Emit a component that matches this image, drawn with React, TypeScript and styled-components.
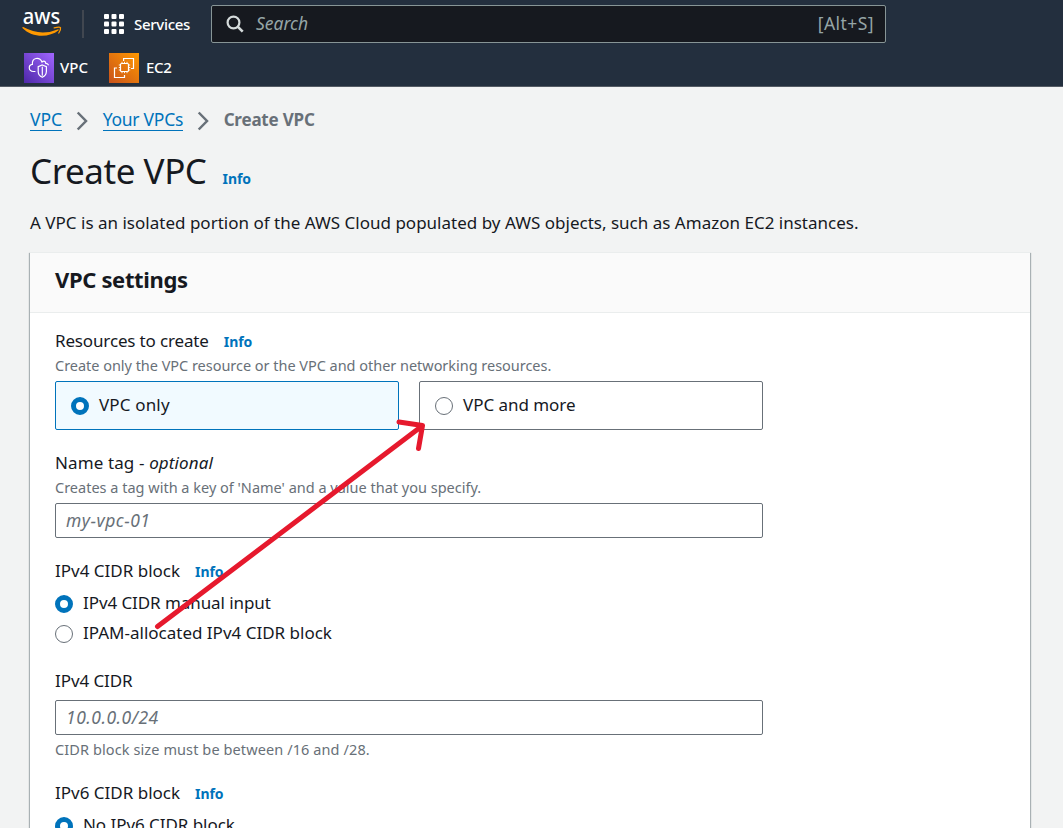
import React from "react";
import styled, { createGlobalStyle } from "styled-components";

const Global = createGlobalStyle`
  * { box-sizing: border-box; }
  html, body { margin: 0; height: 828px; overflow: hidden; background: #f2f3f3; }
  body { font-family: "Noto Sans", "Open Sans", sans-serif; color: #16191f; font-size: 17px; }
`;

const Page = styled.div`
  position: relative;
  height: 828px;
  overflow: hidden;
`;

const Text = styled.span<{ $size?: number; $track?: number; $weight?: number; $color?: string; $italic?: boolean }>`
  font-size: ${(p) => p.$size ?? 17}px;
  letter-spacing: ${(p) => p.$track ?? 0}px;
  font-weight: ${(p) => p.$weight ?? 400};
  color: ${(p) => p.$color ?? "inherit"};
  font-style: ${(p) => (p.$italic ? "italic" : "normal")};
  white-space: nowrap;
`;

const Header = styled.header`
  height: 87px;
  background: #232f3e;
  border-bottom: 1px solid #545b64;
  color: #fff;
`;

const NavRow = styled.div`
  display: flex;
  align-items: center;
  height: 48px;
  padding-left: 22px;
`;

const Divider = styled.div`
  width: 2px;
  height: 28px;
  margin: 0 20px;
  background: #414750;
`;

const Services = styled.div`
  display: flex;
  align-items: center;
  gap: 10px;
  width: 107px;
`;

const SearchBox = styled.div`
  display: flex;
  align-items: center;
  width: 675px;
  height: 38px;
  padding: 0 11px 1px 14px;
  border: 1px solid #879596;
  border-radius: 2px;
  background: #16191f;
  color: #95a5a6;
`;

const SearchHint = styled.div`
  flex: 1;
  margin: -2px 0 0 12px;
`;

const Shortcut = styled.div`
  margin-top: -2px;
`;

const Favorites = styled.div`
  display: flex;
  gap: 21px;
  padding: 5px 0 0 24px;
`;

const Favorite = styled.div<{ $gap: number }>`
  display: flex;
  align-items: center;
  gap: ${(p) => p.$gap}px;
  height: 30px;
  line-height: 28px;

  span { margin-top: -3px; }
`;

const Main = styled.main`
  padding: 0 33px 0 30px;
`;

const Breadcrumbs = styled.nav`
  display: flex;
  align-items: center;
  height: 24px;
  margin-top: 20px;
`;

const Crumb = styled.a`
  height: 23px;
  line-height: 22px;
  border-bottom: 1px solid #0073bb;
  color: #0073bb;
`;

const TitleRow = styled.div`
  display: flex;
  align-items: baseline;
  gap: 16px;
  height: 48px;
  line-height: 46px;
  margin-top: 17px;
`;

const Description = styled.p`
  margin: 15px 0 17px;
  height: 24px;
  line-height: 24px;
`;

const Card = styled.section`
  height: 640px;
  background: #fff;
  border-top: 1px solid #eaeded;
  box-shadow: 1px 1px 1px rgba(0, 28, 36, 0.3), -1px 1px 1px rgba(0, 28, 36, 0.3);
`;

const CardHeader = styled.h2`
  margin: 0;
  height: 60px;
  padding: 0 25px;
  line-height: 50px;
  border-bottom: 1px solid #eaeded;
  background: #fafafa;
`;

const CardBody = styled.div`
  width: 733px;
  padding: 15px 0 0 25px;
`;

const Field = styled.div<{ $gap: number }>`
  margin-bottom: ${(p) => p.$gap}px;
`;

const Label = styled.div<{ $gap?: number }>`
  display: flex;
  align-items: baseline;
  gap: 15px;
  height: 27px;
  line-height: 25px;
  margin-bottom: ${(p) => p.$gap ?? 0}px;
`;

const Hint = styled.div<{ $top?: number }>`
  height: 20px;
  line-height: 20px;
  margin: ${(p) => p.$top ?? 0}px 0 6px;
`;

const Tiles = styled.div`
  display: grid;
  grid-template-columns: 1fr 1fr;
  gap: 20px;
`;

const Tile = styled.div<{ $selected?: boolean }>`
  display: flex;
  align-items: center;
  gap: 10px;
  height: 49px;
  padding: 0 15px 3px;
  border: 1px solid ${(p) => (p.$selected ? "#0073bb" : "#687078")};
  border-radius: 2px;
  background: ${(p) => (p.$selected ? "#f1faff" : "#fff")};
`;

const Radio = styled.span<{ $checked?: boolean }>`
  flex: none;
  width: 18px;
  height: 18px;
  margin-top: 3px;
  border-radius: 50%;
  border: ${(p) => (p.$checked ? "5.5px solid #0073bb" : "1.25px solid #687078")};
  background: #fff;
`;

const RadioRow = styled.div`
  display: flex;
  align-items: center;
  gap: 10px;
  height: 30px;
  padding-bottom: 2px;
`;

const Input = styled.div`
  height: 35px;
  line-height: 32px;
  padding-left: 10px;
  border: 1px solid #687078;
  border-radius: 2px;
`;

const Annotation = styled.svg`
  position: absolute;
  left: 0;
  top: 0;
`;

const Info = () => <Text $size={14} $weight={700} $color="#0073bb" $track={-0.1}>Info</Text>;

const Chevron = styled.svg`
  margin: 3px 15px 0 13.5px;
`;

const Arrow = () => (
  <Chevron width="12" height="20" viewBox="0 0 12 20" fill="none" stroke="#687078" strokeWidth="2.5">
    <path d="M1.700 1.500 L10 10 L1.700 18.500" />
  </Chevron>
);

const LogoText = styled.text`
  font-size: 22.5px;
  font-weight: 500;
`;

const Logo = () => (
  <svg width="40" height="48" viewBox="0 -8 40 48" fill="#fff">
    <LogoText x="0.800" y="16.300" textLength="37.500" lengthAdjust="spacingAndGlyphs">aws</LogoText>
    <path fill="#f90" d="M.4 19.300 Q.6 18.700 1.300 19.100 Q18.500 28.600 35.500 21.400 Q37 21 36.600 22.200 C27 30 10 29.800 .4 19.900 Z" />
    <path fill="none" stroke="#f90" strokeWidth="1.300" strokeLinecap="round" d="M32.200 19.900 Q37.500 18.600 38.500 19.600 Q39 21.500 36.800 25" />
  </svg>
);

const GridIcon = () => (
  <svg width="20" height="20" viewBox="0 0 20 20" fill="#fff">
    {[0, 7.5, 15].map((y) => [0, 7.5, 15].map((x) => <rect key={`${x}-${y}`} x={x} y={y} width="5" height="5" rx="1" />))}
  </svg>
);

const SearchIcon = () => (
  <svg width="18" height="18" viewBox="0 0 18 18" fill="none" stroke="#d5dbdb" strokeWidth="2.200">
    <circle cx="7.500" cy="7.500" r="5.900" />
    <path d="M11.700 11.700 L16.700 16.700" strokeWidth="2.600" />
  </svg>
);

const VpcIcon = () => (
  <svg width="30" height="30" viewBox="0 0 30 30" fill="none" stroke="#fff" strokeWidth="1.200" strokeLinecap="round">
    <linearGradient id="vpc" x1="0" y1="1" x2="1" y2="0">
      <stop offset="0" stopColor="#4d27a8" />
      <stop offset="1" stopColor="#a166ff" />
    </linearGradient>
    <rect width="30" height="30" fill="url(#vpc)" stroke="none" />
    <path d="M11 18.500 H9.500 C3.800 18 4.300 12 8.400 11.400 C7.800 4.500 15.500 3.400 18 9 C20 7.200 21.700 8.600 21.800 10.400 Q23.600 10.500 24.300 11.800" />
    <path d="M18.300 12 L22.400 13.600 V18.500 Q22.200 22.500 18.300 24.300 Q14.300 22.500 14.200 18.500 V13.600 Z M18.300 14 V22.200" />
  </svg>
);

const Ec2Icon = () => (
  <svg width="30" height="30" viewBox="0 0 30 30" fill="none" stroke="#fff" strokeWidth="1.200">
    <linearGradient id="ec2" x1="0" y1="1" x2="1" y2="0">
      <stop offset="0" stopColor="#c8511b" />
      <stop offset="1" stopColor="#f90" />
    </linearGradient>
    <rect width="30" height="30" fill="url(#ec2)" stroke="none" />
    <path d="M14.600 8 V5.500 H24.500 V15.500 H22" />
    <path d="M8 15 H5.500 V24.500 H15.500 V22" />
    <rect x="11.500" y="10.500" width="8" height="8" rx="1" />
    <path strokeWidth=".9" d="M13 8.800 V10.500 M15.500 8.800 V10.500 M18 8.800 V10.500 M13 18.500 V20.200 M15.500 18.500 V20.200 M18 18.500 V20.200 M9.800 12 H11.500 M9.800 14.500 H11.500 M9.800 17 H11.500 M19.500 12 H21.200 M19.500 14.500 H21.200 M19.500 17 H21.200" />
  </svg>
);

export default function App() {
  return (
    <Page>
      <Global />
      <Header>
        <NavRow>
          <Logo />
          <Divider />
          <Services><GridIcon /><Text $size={15} $weight={500} $track={-0.3}>Services</Text></Services>
          <SearchBox>
            <SearchIcon />
            <SearchHint><Text $size={17.5} $italic>Search</Text></SearchHint>
            <Shortcut><Text $size={17.5} $track={0.45}>[Alt+S]</Text></Shortcut>
          </SearchBox>
        </NavRow>
        <Favorites>
          <Favorite $gap={6}><VpcIcon /><Text $size={15} $weight={500}>VPC</Text></Favorite>
          <Favorite $gap={7}><Ec2Icon /><Text $size={15} $weight={500} $track={-0.3}>EC2</Text></Favorite>
        </Favorites>
      </Header>
      <Main>
        <Breadcrumbs>
          <Crumb><Text $size={17.5}>VPC</Text></Crumb><Arrow />
          <Crumb><Text $size={17.5} $track={-0.25}>Your VPCs</Text></Crumb><Arrow />
          <Text $weight={700} $color="#687078" $track={-0.2}>Create VPC</Text>
        </Breadcrumbs>
        <TitleRow><Text $size={35} $track={-0.45}>Create VPC</Text><Info /></TitleRow>
        <Description><Text $track={0.01}>A VPC is an isolated portion of the AWS Cloud populated by AWS objects, such as Amazon EC2 instances.</Text></Description>
        <Card>
          <CardHeader><Text $size={22} $weight={700} $track={-0.35}>VPC settings</Text></CardHeader>
          <CardBody>
            <Field $gap={20}>
              <Label><Text $track={-0.15}>Resources to create</Text><Info /></Label>
              <Hint><Text $size={14.5} $track={-0.03} $color="#687078">Create only the VPC resource or the VPC and other networking resources.</Text></Hint>
              <Tiles>
                <Tile $selected><Radio $checked /><Text $track={0.15}>VPC only</Text></Tile>
                <Tile><Radio /><Text $track={-0.05}>VPC and more</Text></Tile>
              </Tiles>
            </Field>
            <Field $gap={20}>
              <Label><Text $track={0.12}>Name tag - <i>optional</i></Text></Label>
              <Hint><Text $size={14.5} $color="#687078">Creates a tag with a key of 'Name' and a value that you specify.</Text></Hint>
              <Input><Text $size={17.5} $track={0.5} $italic $color="#687078">my-vpc-01</Text></Input>
            </Field>
            <Field $gap={20}>
              <Label $gap={3}><Text>IPv4 CIDR block</Text><Info /></Label>
              <RadioRow><Radio $checked /><Text $track={-0.08}>IPv4 CIDR manual input</Text></RadioRow>
              <RadioRow><Radio /><Text>IPAM-allocated IPv4 CIDR block</Text></RadioRow>
            </Field>
            <Field $gap={21}>
              <Label $gap={5}><Text $track={-0.08}>IPv4 CIDR</Text></Label>
              <Input><Text $size={17.5} $track={0.5} $italic $color="#687078">10.0.0.0/24</Text></Input>
              <Hint $top={4}><Text $size={14.5} $track={0.1} $color="#687078">CIDR block size must be between /16 and /28.</Text></Hint>
            </Field>
            <Field $gap={0}>
              <Label $gap={3}><Text>IPv6 CIDR block</Text><Info /></Label>
              <RadioRow><Radio $checked /><Text $track={-0.05}>No IPv6 CIDR block</Text></RadioRow>
            </Field>
          </CardBody>
        </Card>
      </Main>
      <Annotation width="1063" height="828" viewBox="0 0 1063 828" fill="none" stroke="#e6192d" strokeWidth="5" strokeLinecap="round" strokeLinejoin="round">
        <path d="M157.500 626.500 L422 426 M399 422 L422.500 425.500 L418.500 448.500" />
      </Annotation>
    </Page>
  );
}
